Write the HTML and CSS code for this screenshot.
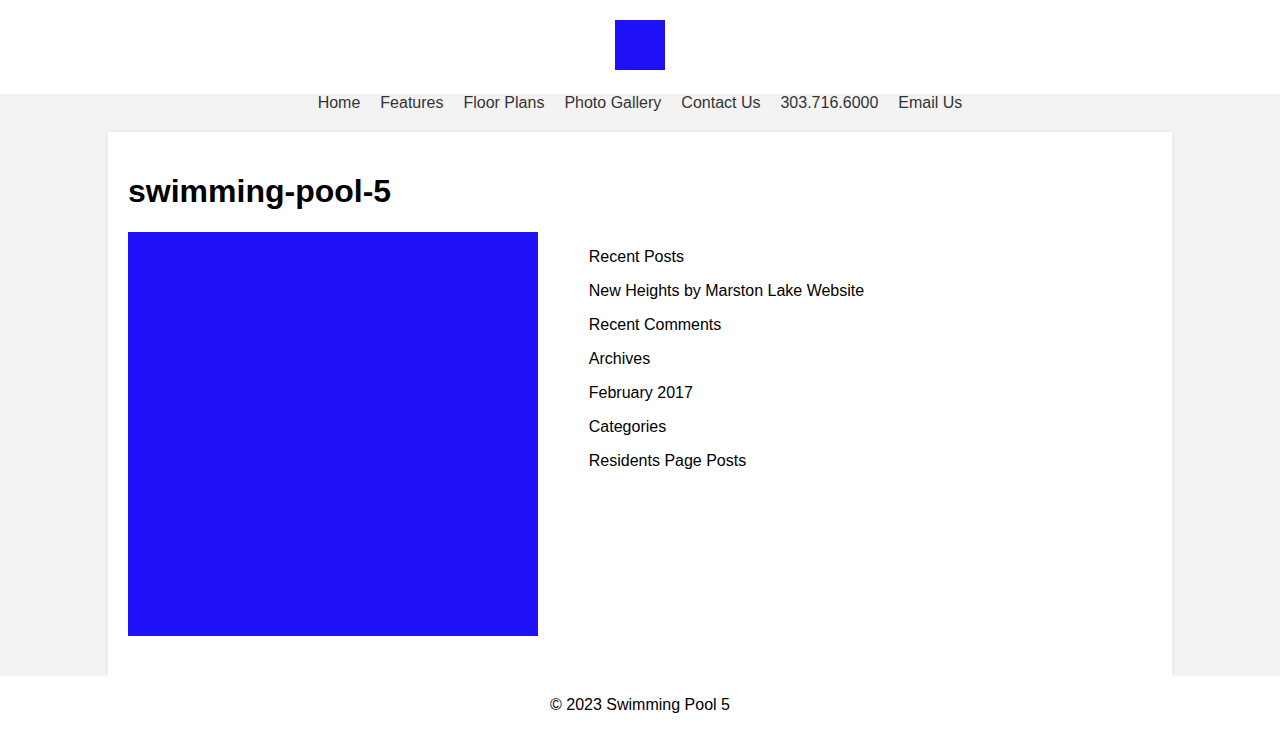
FILE: index.html
```html
<!DOCTYPE html>
<html lang="en">
<head>
<meta charset="utf-8">
<title>swimming-pool-5</title>
<link rel="stylesheet" href="styles.css">
</head>
<body>
<header class="site-header">
  <div class="logo"></div>
</header>
<div class="page">
  <nav class="main-nav">
    <a href="#">Home</a>
    <a href="#">Features</a>
    <a href="#">Floor Plans</a>
    <a href="#">Photo Gallery</a>
    <a href="#">Contact Us</a>
    <a href="#">303.716.6000</a>
    <a href="#">Email Us</a>
  </nav>
  <main class="card">
    <h1 class="title">swimming-pool-5</h1>
    <div class="content">
      <div class="image"></div>
      <ul class="sidebar">
        <li>Recent Posts</li>
        <li>New Heights by Marston Lake Website</li>
        <li>Recent Comments</li>
        <li>Archives</li>
        <li>February 2017</li>
        <li>Categories</li>
        <li>Residents Page Posts</li>
      </ul>
    </div>
  </main>
</div>
<footer class="site-footer">© 2023 Swimming Pool 5</footer>
</body>
</html>
```
FILE: styles.css
```css
html, body {
  margin: 0;
  padding: 0;
}
body {
  font-family: "Liberation Sans", Arial, sans-serif;
  font-size: 16px;
  color: #000;
  background: #fff;
}
.site-header {
  display: flex;
  justify-content: center;
  padding: 20px 0 24px;
  background: #fff;
}
.logo {
  width: 50px;
  height: 50px;
  background: #1f11f7;
}
.page {
  background: #f3f3f3;
  overflow: hidden;
}
.main-nav {
  display: flex;
  justify-content: center;
  gap: 20px;
  line-height: 18px;
}
.main-nav a {
  color: #333;
  text-decoration: none;
}
.card {
  margin: 20px 108px 0;
  background: #fff;
  padding: 20px 20px 40px;
  box-shadow: 0 0 4px rgba(0, 0, 0, 0.08);
}
.title {
  font-size: 32px;
  font-weight: bold;
  margin: 21px 0 22px;
  line-height: 37px;
}
.content {
  display: flex;
  align-items: flex-start;
}
.image {
  width: 40%;
  height: 404px;
  background: #1f11f7;
  flex-shrink: 0;
}
.sidebar {
  list-style: none;
  margin: 0 0 0 5%;
  padding: 13px 0 0;
}
.sidebar li {
  line-height: 24px;
  margin-bottom: 10px;
}
.site-footer {
  text-align: center;
  padding: 20px 0;
  line-height: 18px;
  background: #fff;
}
```
